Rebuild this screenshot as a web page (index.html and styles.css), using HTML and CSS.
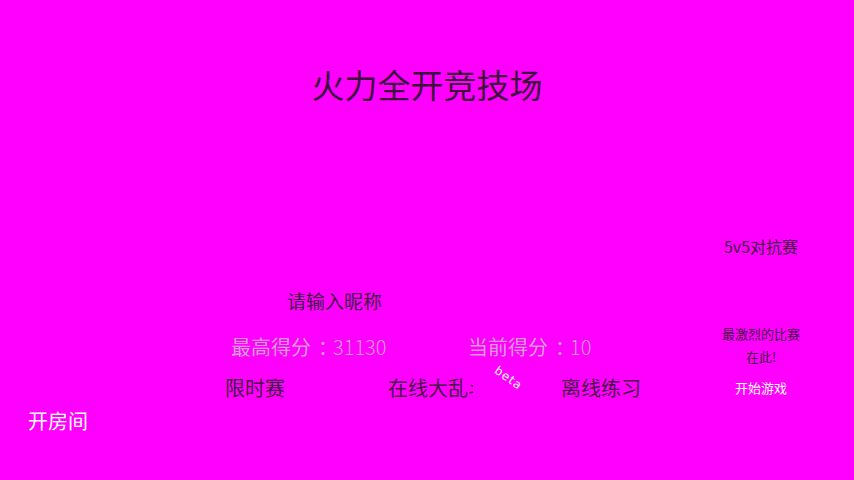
FILE: index.html
```html
<!DOCTYPE html>
<html lang="zh">
<head>
<meta charset="utf-8">
<title>火力全开竞技场</title>
<link rel="stylesheet" href="styles.css">
</head>
<body>
<div class="screen">
  <h1 class="title">火力全开竞技场</h1>
  <div class="content">
    <div class="menu">
      <div class="nick">请输入昵称</div>
      <div class="scores">
        <span class="score best">最高得分<span class="colon">：</span><span class="num">31130</span></span>
        <span class="score current">当前得分<span class="colon">：</span><span class="num">10</span></span>
      </div>
      <div class="modes">
        <span class="mode timed">限时赛</span>
        <span class="mode-wrap">
          <span class="mode online">在线大乱斗</span>
          <span class="beta">beta</span>
        </span>
        <span class="mode offline">离线练习</span>
      </div>
      <div class="room">开房间</div>
    </div>
    <div class="panel">
      <div class="panel-title">5v5对抗赛</div>
      <div class="panel-desc">最激烈的比赛<br>在此!</div>
      <div class="panel-start">开始游戏</div>
    </div>
  </div>
</div>
</body>
</html>
```
FILE: styles.css
```css
html, body {
  margin: 0;
  padding: 0;
  background: #ff00ff;
}
.screen {
  width: 854px;
  height: 480px;
  overflow: hidden;
  font-family: "Noto Sans CJK SC", "Noto Sans", sans-serif;
  color: #461446;
}
.title {
  margin: 0;
  padding-top: 64px;
  font-size: 33px;
  line-height: 40px;
  font-weight: 400;
  text-align: center;
  color: #3c103c;
}
.content {
  display: flex;
}
.menu {
  width: 711px;
  display: flex;
  flex-direction: column;
}
.nick {
  margin-top: 185px;
  margin-left: 287px;
  font-size: 19px;
  line-height: 24px;
}
.scores {
  display: flex;
  margin-top: 22px;
  font-size: 20px;
  line-height: 24px;
  color: #d99ad9;
  white-space: nowrap;
}
.colon {
  padding-left: 7px;
  letter-spacing: -5px;
}
.num {
  font-weight: 300;
}
.best { margin-left: 231px; width: 237px; }
.modes {
  display: flex;
  margin-top: 17px;
  font-size: 20px;
  line-height: 24px;
}
.timed { margin-left: 225px; width: 163px; }
.mode-wrap {
  position: relative;
  width: 173px;
}
.online {
  display: block;
  width: 85px;
  white-space: nowrap;
  overflow: hidden;
}
.beta {
  position: absolute;
  left: 105px;
  top: -4px;
  font-family: "DejaVu Sans", sans-serif;
  font-size: 12px;
  line-height: 12px;
  letter-spacing: 1px;
  color: #ffffff;
  transform: rotate(35deg);
  transform-origin: center;
}
.room {
  margin-top: 9px;
  margin-left: 28px;
  font-size: 20px;
  line-height: 24px;
  color: #ffffff;
}
.panel {
  width: 100px;
  display: flex;
  flex-direction: column;
  align-items: center;
  text-align: center;
}
.panel-title {
  margin-top: 132px;
  font-size: 16px;
  line-height: 20px;
}
.panel-desc {
  margin-top: 66px;
  font-size: 13px;
  line-height: 23px;
}
.panel-start {
  margin-top: 10px;
  font-size: 13px;
  line-height: 20px;
  color: #ffffff;
}
```
